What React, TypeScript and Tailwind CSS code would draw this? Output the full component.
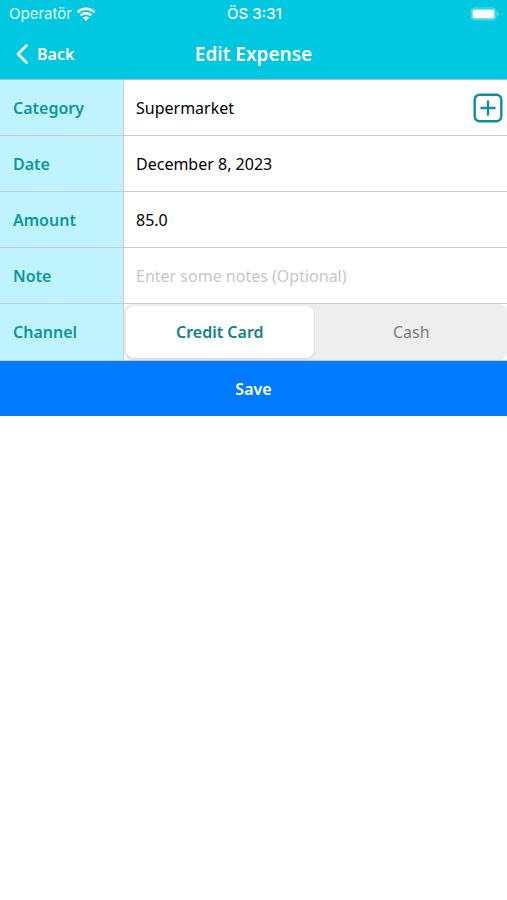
import { useState, ReactNode } from "react";

interface rowProps {
    id: string;
    label: string;
    children: ReactNode;
}

function Row({ id, label, children }: rowProps) {
    return (
        <div className="flex min-h-14 border-b border-[#cccccc]">
            <label
                htmlFor={id}
                className="flex w-31 shrink-0 items-center border-r border-[#cccccc] bg-[#bff4ff] pl-[13px] font-semibold text-[#0f969c]"
            >
                {label}
            </label>
            <div className="flex min-w-0 flex-1 items-center">{children}</div>
        </div>
    );
}

const inputClass = "h-full w-full min-w-0 flex-1 px-3 text-black outline-none placeholder:text-[#c7c7c7]";

export default function App() {
    const [category, setCategory] = useState("Supermarket");
    const [date, setDate] = useState("December 8, 2023");
    const [amount, setAmount] = useState("85.0");
    const [note, setNote] = useState("");
    const [channel, setChannel] = useState("Credit Card");

    return (
        <div className="min-h-screen bg-white font-['Trebuchet_MS','Noto_Sans',sans-serif] text-base">
            <header className="border-b border-[#8fc5d0] bg-[#00c8e0] text-white">
                <div className="grid h-7 grid-cols-3 items-center pr-[7px] pl-[9px] font-['Inter',sans-serif] text-[15px]">
                    <div className="flex items-center gap-1">
                        <span className="text-white/90">Operatör</span>
                        <svg width="20" height="14" viewBox="0 0 20 14" fill="none" stroke="currentColor" strokeWidth="2.6">
                            <path d="M1.5 5.2C6.2.6 13.8.6 18.5 5.2" />
                            <path d="M4.7 8.4C7.7 5.6 12.3 5.6 15.3 8.4" />
                            <path d="M10 14 6.8 10.8C8.6 9.2 11.4 9.2 13.2 10.8Z" fill="currentColor" stroke="none" />
                        </svg>
                    </div>
                    <span className="text-center font-medium">ÖS 3:31</span>
                    <svg className="justify-self-end" width="30" height="14" viewBox="0 0 30 14">
                        <rect x="1" y="1" width="25" height="12" rx="3.5" fill="none" stroke="#fff" strokeOpacity=".4" />
                        <rect x="2.5" y="2.5" width="22" height="9" rx="1.8" fill="#fff" />
                        <path d="M27.5 5v4c1.6-.6 1.6-3.4 0-4Z" fill="#fff" fillOpacity=".5" />
                    </svg>
                </div>
                <div className="grid h-[51px] grid-cols-3 items-center">
                    <button type="button" className="flex items-center gap-2 pl-4 font-semibold">
                        <svg width="13" height="20" viewBox="0 0 13 20" fill="none" stroke="currentColor" strokeWidth="2.6" strokeLinecap="round" strokeLinejoin="round">
                            <path d="M10.5 1.5 2 10l8.5 8.5" />
                        </svg>
                        Back
                    </button>
                    <h1 className="text-center text-[19px] leading-6 font-semibold">Edit Expense</h1>
                </div>
            </header>

            <form onSubmit={(e) => e.preventDefault()}>
                <Row id="category" label="Category">
                    <input id="category" type="text" className={inputClass} value={category} onChange={(e) => setCategory(e.target.value)} />
                    <button type="button" aria-label="Add category" className="mr-1 shrink-0 text-[#0f8f98]">
                        <svg width="30" height="30" viewBox="0 0 30 30" fill="none" stroke="currentColor" strokeWidth="2.4" strokeLinecap="round">
                            <rect x="1.7" y="1.7" width="26.6" height="26.6" rx="5" />
                            <path d="M15 8.5v13M8.5 15h13" />
                        </svg>
                    </button>
                </Row>
                <Row id="date" label="Date">
                    <input id="date" type="text" className={inputClass} value={date} onChange={(e) => setDate(e.target.value)} />
                </Row>
                <Row id="amount" label="Amount">
                    <input id="amount" type="text" inputMode="decimal" className={inputClass} value={amount} onChange={(e) => setAmount(e.target.value)} />
                </Row>
                <Row id="note" label="Note">
                    <input id="note" type="text" placeholder="Enter some notes (Optional)" className={inputClass} value={note} onChange={(e) => setNote(e.target.value)} />
                </Row>
                <Row id="credit" label="Channel">
                    <div role="radiogroup" aria-label="Channel" className="grid h-14 w-full grid-cols-2 rounded-lg bg-[#eeeeee]">
                        <label className="relative m-0.5 flex cursor-pointer items-center justify-center rounded-lg text-[#808080] has-checked:bg-white has-checked:font-semibold has-checked:text-[#0f8388] has-checked:shadow">
                            <input id="credit" type="radio" name="channel" className="sr-only" checked={channel === "Credit Card"} onChange={() => setChannel("Credit Card")} />
                            Credit Card
                        </label>
                        <label className="relative m-0.5 flex cursor-pointer items-center justify-center rounded-lg text-[#808080] has-checked:bg-white has-checked:font-semibold has-checked:text-[#0f8388] has-checked:shadow">
                            <input type="radio" name="channel" className="sr-only" checked={channel === "Cash"} onChange={() => setChannel("Cash")} />
                            Cash
                        </label>
                    </div>
                </Row>
                <button type="submit" className="h-[55px] w-full bg-[#007aff] font-semibold text-white">
                    Save
                </button>
            </form>
        </div>
    );
}
